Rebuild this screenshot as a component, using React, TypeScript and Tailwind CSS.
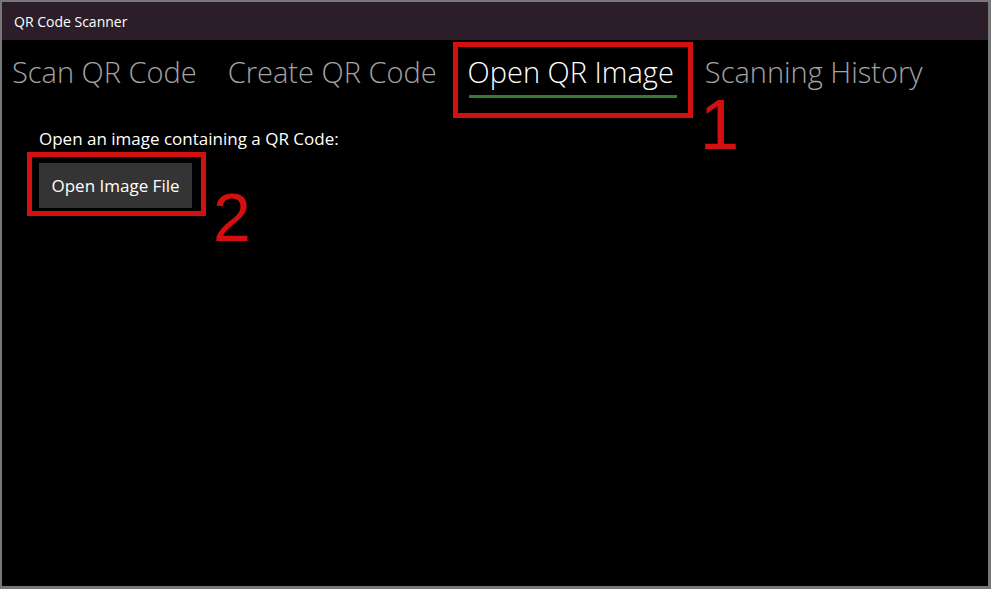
const tabs = ["Scan QR Code", "Create QR Code", "Open QR Image", "Scanning History"];

const Marker = ({ className }: { className: string }) => (
  <div className={`absolute border-[5px] border-[#d40f0f] pointer-events-none ${className}`} />
);

export default function App() {
  const active = 2;

  return (
    <div
      className="w-[991px] h-[589px] flex flex-col bg-black border-t-2 border-l-2 border-r-[3px] border-b-[3px] border-[#777777] overflow-hidden"
      style={{ fontFamily: '"Segoe UI", "Open Sans", "Noto Sans", sans-serif' }}
    >
      {/* Title bar */}
      <div className="h-[38px] shrink-0 bg-[#2b1e29] flex items-center pl-3 text-[14px] text-white">
        QR Code Scanner
      </div>

      {/* Pivot headers */}
      <div className="flex gap-[31px] pl-[10px] pt-[12px] text-[29px] font-light leading-[40px]">
        {tabs.map((t, i) => (
          <div key={t} className={`relative ${i === active ? "text-white" : "text-[#a3a3a3]"}`}>
            <div>{t}</div>
            {i === active && (
              <>
                <div className="h-[3px] bg-[#2f7d32] mt-[3px] ml-px mr-[-3px]" />
                <Marker className="-left-[15px] -right-[19px] -top-[10px] -bottom-[20px]" />
                <div
                  className="absolute left-[calc(100%+26px)] top-[37px] text-[71px] leading-none text-[#d40f0f]"
                  style={{ fontFamily: '"Liberation Sans", Arial, sans-serif' }}
                >
                  1
                </div>
              </>
            )}
          </div>
        ))}
      </div>

      {/* Content */}
      <div className="pl-[37px] pt-[31px] text-white">
        <div className="text-[17px] leading-[20px]">Open an image containing a QR Code:</div>
        <div className="relative inline-block mt-[14px]">
          <button className="h-[45px] w-[153px] bg-[#343434] text-white text-[17px]">Open Image File</button>
          <Marker className="-left-[12px] -right-[14px] -top-[11px] -bottom-[8px]" />
          <div
            className="absolute left-[174px] top-[20px] text-[68px] leading-none text-[#d40f0f]"
            style={{ fontFamily: '"Liberation Sans", Arial, sans-serif' }}
          >
            2
          </div>
        </div>
      </div>
    </div>
  );
}
